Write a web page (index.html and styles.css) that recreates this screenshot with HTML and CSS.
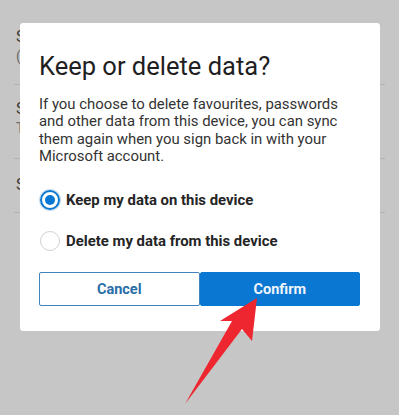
FILE: index.html
```html
<!DOCTYPE html>
<html>
<head>
<meta charset="utf-8">
<link rel="stylesheet" href="styles.css">
</head>
<body>
<div class="screen">
  <div class="list">
    <div class="item item1">
      <div class="item-title">S</div>
      <div class="item-sub">(</div>
    </div>
    <div class="item item2">
      <div class="item-title">S</div>
      <div class="item-sub">T</div>
    </div>
    <div class="item item3">
      <div class="item-title">S</div>
    </div>
  </div>

  <div class="dialog">
    <h1 class="title">Keep or delete data?</h1>
    <p class="body">If you choose to delete favourites, passwords and other data from this device, you can sync them again when you sign back in with your Microsoft account.</p>
    <div class="options">
      <div class="option">
        <span class="radio checked"><span class="dot"></span></span>
        <span class="label">Keep my data on this device</span>
      </div>
      <div class="option">
        <span class="radio"></span>
        <span class="label">Delete my data from this device</span>
      </div>
    </div>
    <div class="buttons">
      <button class="btn cancel">Cancel</button>
      <button class="btn confirm">Confirm</button>
    </div>
  </div>

  <svg class="arrow" width="399" height="415" viewBox="0 0 399 415">
    <polygon points="257,298 252,341 242,329 185,404 232,321 220,321" fill="#ee2630"/>
  </svg>
</div>
</body>
</html>
```
FILE: styles.css
```css
html, body {
  margin: 0;
  padding: 0;
}
body {
  background: #c6c6c6;
  font-family: Roboto, "Noto Sans", sans-serif;
}
.screen {
  position: relative;
  width: 399px;
  height: 415px;
  overflow: hidden;
  background: #c6c6c6;
}
.list {
  padding: 0 14px 0 16px;
}
.item {
  border-bottom: 1px solid #b4b4b4;
  margin-left: -2px;
  padding-left: 2px;
}
.item1 { padding-top: 27px; padding-bottom: 19px; }
.item2 { padding-top: 14px; padding-bottom: 21px; }
.item3 { padding-top: 16px; padding-bottom: 17px; }
.item-title {
  font-size: 16px;
  line-height: 20px;
  color: #3a3a3a;
}
.item-sub {
  font-size: 14px;
  line-height: 18px;
  color: #6a6a6a;
}
.dialog {
  position: absolute;
  left: 20px;
  top: 23px;
  width: 360px;
  height: 308px;
  box-sizing: border-box;
  background: #ffffff;
  border-radius: 3px;
  padding: 29px 20px 0 19px;
}
.title {
  margin: 0;
  font-size: 25.5px;
  line-height: 28px;
  font-weight: 400;
  color: #1f1f1f;
}
.body {
  margin: 16px 0 0 0;
  max-width: 314px;
  font-size: 14.9px;
  line-height: 17.3px;
  color: #333333;
}
.options {
  margin-top: 24px;
  display: flex;
  flex-direction: column;
  gap: 20px;
}
.option {
  display: flex;
  align-items: center;
  height: 21px;
}
.radio {
  width: 20px;
  height: 20px;
  box-sizing: border-box;
  border-radius: 50%;
  border: 1.5px solid #d2d2d2;
  margin-left: 1px;
  display: flex;
  align-items: center;
  justify-content: center;
}
.radio.checked {
  border: 2px solid #0a78d2;
  box-shadow: 0 0 0 1px #c9dcec;
}
.dot {
  width: 10px;
  height: 10px;
  border-radius: 50%;
  background: #0a78d2;
}
.label {
  margin-left: 6px;
  font-size: 14.9px;
  font-weight: 700;
  color: #252525;
}
.buttons {
  margin-top: 21px;
  display: flex;
}
.btn {
  flex: 1;
  height: 34px;
  font-family: Roboto, "Noto Sans", sans-serif;
  font-size: 14.5px;
  font-weight: 700;
  border-radius: 2px;
  cursor: pointer;
}
.cancel {
  background: #ffffff;
  color: #2a6ea8;
  border: 1.5px solid #3f82bd;
}
.confirm {
  background: #0a78d2;
  color: #eef5fc;
  border: 1px solid #0a78d2;
}
.arrow {
  position: absolute;
  left: 0;
  top: 0;
  pointer-events: none;
}
```
